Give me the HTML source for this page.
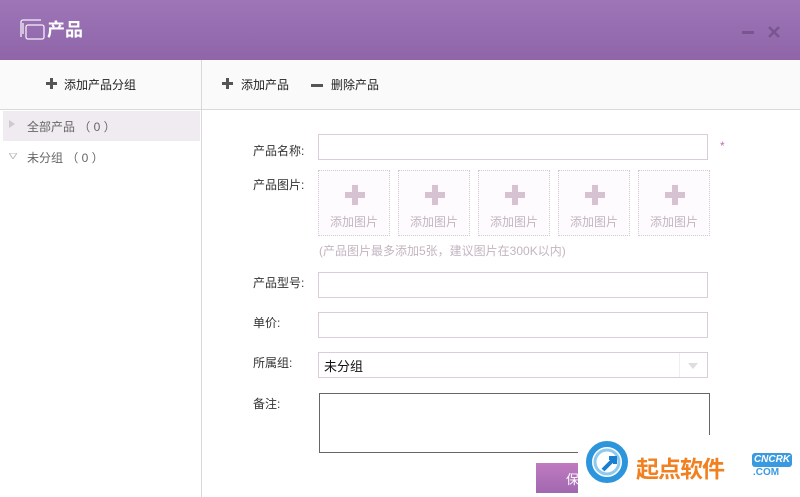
<!DOCTYPE html>
<html><head><meta charset="utf-8"><style>
*{margin:0;padding:0;box-sizing:border-box}
body{width:800px;height:497px;overflow:hidden;background:#fff;font-family:"Liberation Sans","Noto Sans CJK SC","WenQuanYi Zen Hei",sans-serif;font-size:12px;color:#333;position:relative}
.hd{position:absolute;left:0;top:0;width:800px;height:60px;background:linear-gradient(#9d76b8,#8f65a8)}
.hd .t{position:absolute;left:47px;top:19px;color:#fff;font-size:18px;font-weight:bold;line-height:22px}
.tb{position:absolute;left:0;top:60px;width:800px;height:50px;background:#fafafa;border-bottom:1px solid #d9d9d9}
.vl{position:absolute;left:201px;top:60px;width:1px;height:437px;background:#d9d9d9}
.ab{position:absolute;font-size:12px;color:#222;line-height:14px}
.sel{position:absolute;left:3px;top:111px;width:197px;height:30px;background:#f0ebf0}
.g{position:absolute;color:#666;font-size:12px}
.lb{position:absolute;left:253px;color:#333;font-size:12px}
.in{position:absolute;left:318px;width:390px;height:26px;border:1px solid #dccbd8;background:#fff}
.pic{position:absolute;top:170px;width:72px;height:66px;border:1px dotted #d5c8d2;background:#fdfbfd}
.pic .p{position:absolute;left:26px;top:14px;width:20px;height:20px}
.pic .p:before{content:"";position:absolute;left:7px;top:0;width:6px;height:20px;background:#d7c2d2}
.pic .p:after{content:"";position:absolute;left:0;top:7px;width:20px;height:6px;background:#d7c2d2}
.pic span{position:absolute;left:0;width:100%;text-align:center;top:42px;color:#c3b5c0;font-size:12px}
</style></head><body>
<div class="hd">
<svg style="position:absolute;left:18px;top:17px" width="30" height="24" viewBox="0 0 30 24" fill="none" stroke="#fff" stroke-width="1.3" opacity=".9"><path d="M3 20V5a2 2 0 0 1 2-2h18"/><rect x="8" y="8" width="18" height="14" rx="2"/><path d="M5 17V6"/></svg>
<div class="t">产品</div>
<div style="position:absolute;left:742px;top:31px;width:12px;height:3px;background:#7a5690"></div>
<svg style="position:absolute;left:768px;top:26px" width="12" height="12"><path d="M1 1L11 11M11 1L1 11" stroke="#7a5690" stroke-width="2.5"/></svg>
</div>
<div class="tb"></div>
<div class="vl"></div>
<svg style="position:absolute;left:46px;top:78px" width="11" height="11"><path d="M0 5.5H11M5.5 0V11" stroke="#555" stroke-width="3"/></svg>
<div class="ab" style="left:64px;top:78px">添加产品分组</div>
<svg style="position:absolute;left:222px;top:78px" width="11" height="11"><path d="M0 5.5H11M5.5 0V11" stroke="#555" stroke-width="3"/></svg>
<div class="ab" style="left:241px;top:78px">添加产品</div>
<div style="position:absolute;left:311px;top:84px;width:12px;height:3px;background:#555"></div>
<div class="ab" style="left:331px;top:78px">删除产品</div>
<div class="sel"></div>
<svg style="position:absolute;left:9px;top:120px" width="6" height="8"><path d="M0 0L6 4L0 8Z" fill="#ccc"/></svg>
<div class="g" style="left:27px;top:118px">全部产品 （ 0 ）</div>
<svg style="position:absolute;left:9px;top:153px" width="8" height="6"><path d="M0 0H8L4 6Z" fill="none" stroke="#bbb"/></svg>
<div class="g" style="left:27px;top:149px">未分组 （ 0 ）</div>

<div class="lb" style="top:142px">产品名称:</div>
<div class="in" style="top:134px"></div>
<div style="position:absolute;left:720px;top:139px;color:#c070b0;font-size:12px">*</div>
<div class="lb" style="top:176px">产品图片:</div>
<div class="pic" style="left:318px"><div class="p"></div><span>添加图片</span></div>
<div class="pic" style="left:398px"><div class="p"></div><span>添加图片</span></div>
<div class="pic" style="left:478px"><div class="p"></div><span>添加图片</span></div>
<div class="pic" style="left:558px"><div class="p"></div><span>添加图片</span></div>
<div class="pic" style="left:638px"><div class="p"></div><span>添加图片</span></div>
<div style="position:absolute;left:319px;top:242px;color:#c3b5c0;font-size:12px">(产品图片最多添加5张，建议图片在300K以内)</div>
<div class="lb" style="top:274px">产品型号:</div>
<div class="in" style="top:272px"></div>
<div class="lb" style="top:314px">单价:</div>
<div class="in" style="top:312px"></div>
<div class="lb" style="top:354px">所属组:</div>
<div class="in" style="top:352px"><span style="position:absolute;left:5px;top:3px;color:#111;font-size:13px">未分组</span><div style="position:absolute;left:360px;top:0;width:1px;height:24px;background:#eee"></div><svg style="position:absolute;left:369px;top:10px" width="10" height="6"><path d="M0 0H10L5 6Z" fill="#ddd"/></svg></div>
<div class="lb" style="top:395px">备注:</div>
<div style="position:absolute;left:319px;top:393px;width:391px;height:60px;border:1px solid #666"></div>
<div style="position:absolute;left:536px;top:463px;width:60px;height:30px;background:linear-gradient(#c07ac0,#a068b0);color:#fff;font-size:13px;padding:6px 0 0 30px">保存</div>
<div style="position:absolute;left:578px;top:435px;width:222px;height:62px;background:#fff"></div>
<svg style="position:absolute;left:585px;top:440px" width="44" height="44" viewBox="0 0 44 44"><circle cx="22" cy="22" r="18" fill="none" stroke="#2d95dc" stroke-width="6"/><circle cx="22" cy="22" r="12" fill="none" stroke="#8ccaf0" stroke-width="3"/><path d="M18 30L30 18M24 18H30V24" stroke="#1a7fd0" stroke-width="4" fill="none"/></svg>
<div style="position:absolute;left:636px;top:450px;color:#f08020;font-size:23px;font-weight:bold;letter-spacing:-1px">起点软件</div>
<div style="position:absolute;left:752px;top:453px;width:40px;height:14px;background:#3a9ae0;border-radius:3px;color:#fff;font-size:10px;font-weight:bold;font-style:italic;text-align:center;line-height:14px">CNCRK</div>
<div style="position:absolute;left:753px;top:467px;color:#3a9ae0;font-size:10px;font-weight:bold">.COM</div>
</body></html>
